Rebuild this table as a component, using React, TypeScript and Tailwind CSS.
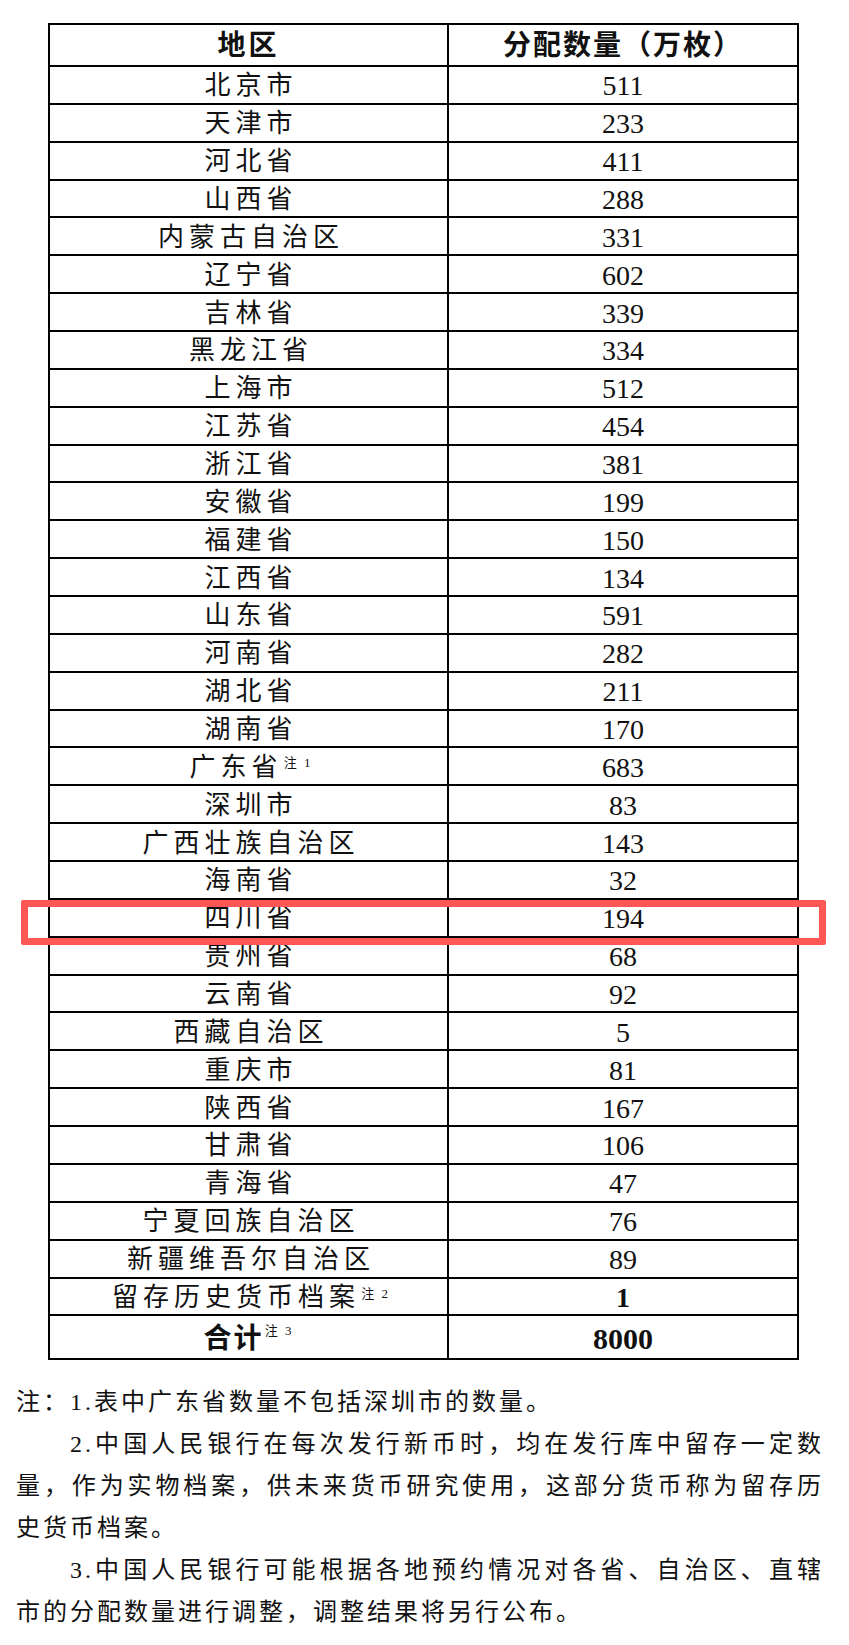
const rows: { name: string; value: string; note?: string; bold?: boolean }[] = [
  { name: "北京市", value: "511" },
  { name: "天津市", value: "233" },
  { name: "河北省", value: "411" },
  { name: "山西省", value: "288" },
  { name: "内蒙古自治区", value: "331" },
  { name: "辽宁省", value: "602" },
  { name: "吉林省", value: "339" },
  { name: "黑龙江省", value: "334" },
  { name: "上海市", value: "512" },
  { name: "江苏省", value: "454" },
  { name: "浙江省", value: "381" },
  { name: "安徽省", value: "199" },
  { name: "福建省", value: "150" },
  { name: "江西省", value: "134" },
  { name: "山东省", value: "591" },
  { name: "河南省", value: "282" },
  { name: "湖北省", value: "211" },
  { name: "湖南省", value: "170" },
  { name: "广东省", value: "683", note: "注 1" },
  { name: "深圳市", value: "83" },
  { name: "广西壮族自治区", value: "143" },
  { name: "海南省", value: "32" },
  { name: "四川省", value: "194" },
  { name: "贵州省", value: "68" },
  { name: "云南省", value: "92" },
  { name: "西藏自治区", value: "5" },
  { name: "重庆市", value: "81" },
  { name: "陕西省", value: "167" },
  { name: "甘肃省", value: "106" },
  { name: "青海省", value: "47" },
  { name: "宁夏回族自治区", value: "76" },
  { name: "新疆维吾尔自治区", value: "89" },
  { name: "留存历史货币档案", value: "1", note: "注 2", bold: true },
];

function Note({ text }: { text: string }) {
  return (
    <span className="ml-[1px] self-start pt-[5px] text-[13px] leading-none font-normal tracking-[2px] whitespace-pre">
      {text}
    </span>
  );
}

function DataRow({ name, value, note, bold }: (typeof rows)[number]) {
  return (
    <div className="grid h-[37.87px] grid-cols-[399px_1fr] border-b-2 border-black">
      <div className="flex items-center justify-center border-r-2 border-black pt-[3px] pl-[5px] text-[26px] leading-none tracking-[5px]">
        <span className="flex h-full items-center">
          {name}
          {note && <Note text={note} />}
        </span>
      </div>
      <div
        className={
          "flex items-center justify-center pt-[3px] text-[28px] leading-none " +
          (bold ? "font-bold" : "")
        }
      >
        {value}
      </div>
    </div>
  );
}

export default function App() {
  return (
    <div className="relative min-h-[1645px] w-[849px] bg-white pt-[23px] font-['Liberation_Serif','Noto_Sans_CJK_SC',serif] text-[#111]">
      <div className="ml-[48px] w-[751px] border-2 border-black">
        <div className="grid h-[42px] grid-cols-[399px_1fr] border-b-2 border-black font-bold">
          <div className="flex items-center justify-center border-r-2 border-black pt-[2px] text-[28px] leading-none tracking-[3px]">
            地区
          </div>
          <div className="flex items-center justify-center pt-[2px] text-[28px] leading-none tracking-[2px]">
            分配数量（万枚）
          </div>
        </div>
        {rows.map((r) => (
          <DataRow key={r.name} {...r} />
        ))}
        <div className="grid h-[41.3px] grid-cols-[399px_1fr] font-bold">
          <div className="flex items-center justify-center border-r-2 border-black pt-[3px] text-[28px] leading-none tracking-[2px]">
            <span className="flex h-full items-center">
              合计
              <Note text="注 3" />
            </span>
          </div>
          <div className="flex items-center justify-center pt-[3px] text-[30px] leading-none">
            8000
          </div>
        </div>
      </div>

      <div className="pointer-events-none absolute top-[900px] left-[21px] h-[45px] w-[805px] rounded-[2px] border-[7px] border-[#ff5656]" />

      <div className="mt-[21px] w-[824px] pl-[16px] text-[24px] leading-[42px] tracking-[3px] whitespace-nowrap">
        <p>注：1.表中广东省数量不包括深圳市的数量。</p>
        <p className="pl-[54px] text-justify [text-align-last:justify]">
          2.中国人民银行在每次发行新币时，均在发行库中留存一定数
        </p>
        <p className="text-justify [text-align-last:justify]">
          量，作为实物档案，供未来货币研究使用，这部分货币称为留存历
        </p>
        <p>史货币档案。</p>
        <p className="pl-[54px] text-justify [text-align-last:justify]">
          3.中国人民银行可能根据各地预约情况对各省、自治区、直辖
        </p>
        <p>市的分配数量进行调整，调整结果将另行公布。</p>
      </div>
    </div>
  );
}
